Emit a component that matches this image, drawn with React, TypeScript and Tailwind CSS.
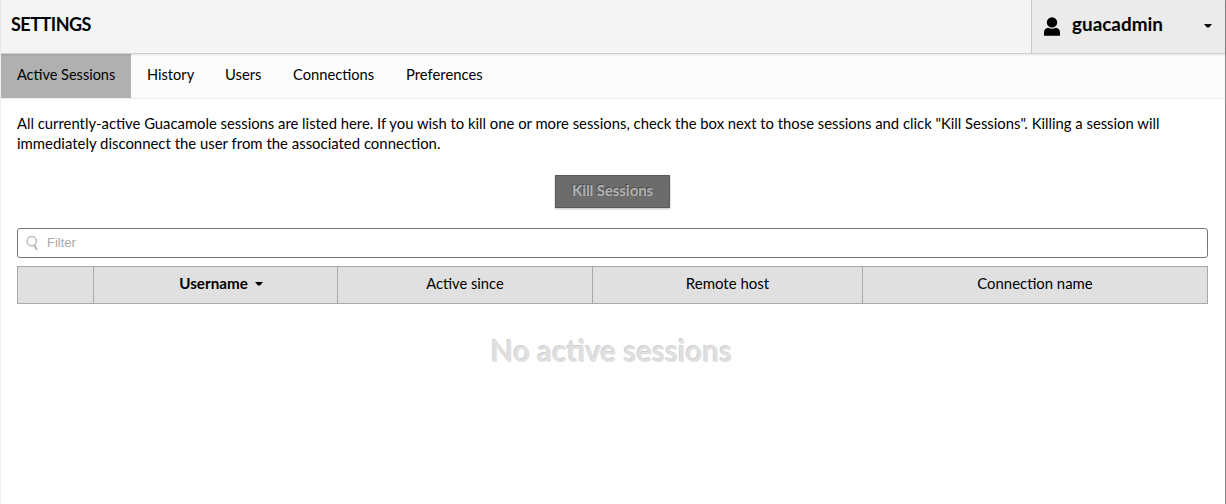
import type { ReactNode } from "react";

const tabs = [
  { label: "Active Sessions", className: "w-[130px] bg-[#b0b0b0] pt-[11px] text-[14.5px]" },
  { label: "History", className: "w-[78px] pt-[11px] text-[14.6px]" },
  { label: "Users", className: "w-[68px] pt-[10px] text-[14.8px]" },
  { label: "Connections", className: "w-[113px] pt-[10px] text-[14.7px]" },
  { label: "Preferences", className: "w-[109px] pt-[10px] text-[14.8px]" },
];

function Caret() {
  return (
    <svg className="h-1 w-2 shrink-0" viewBox="0 0 8 4" fill="black" aria-hidden="true">
      <path d="M0 0H8L5 3.5H3Z" />
    </svg>
  );
}

function HeaderCell({ width, children }: { width: string; children?: ReactNode }) {
  return (
    <th className={`h-[37px] border border-[#aaa] bg-[#e0e0e0] p-0 pb-[5px] font-normal ${width}`}>
      {children}
    </th>
  );
}

export default function App() {
  return (
    <div className="flex h-[504px] w-[1226px] flex-col border-r border-l border-r-[#878787] border-l-[#efefef] bg-white font-['Lato',sans-serif] text-[14.7px] leading-5 text-black">
      <header className="relative flex h-[54px] shrink-0 border-b border-[#d0d0d0] bg-[#f4f4f4] shadow-[0_1px_2px_rgba(0,0,0,0.1)]">
        <h1 className="flex-1 pt-3 pl-[10px] text-[18px] leading-6 font-bold tracking-[-0.5px]">SETTINGS</h1>
        <div className="flex w-[194px] border-l border-[#c8c8c8] bg-[#ebebeb]">
          <svg className="mt-[17px] ml-[12px] h-[19px] w-4" viewBox="0 0 16 19" aria-hidden="true">
            <circle cx="8" cy="5.4" r="5.2" />
            <path d="M0 18.8V15.5C0 12.5 2 11 4.3 10.8C6.5 12 9.5 12 11.7 10.8C14 11 16 12.5 16 15.5V18.8Z" />
          </svg>
          <span className="ml-3 w-[132px] pt-3 text-[18.9px] leading-6 font-bold">guacadmin</span>
          <span className="pt-6"><Caret /></span>
        </div>
      </header>
      <nav className="flex h-[45px] shrink-0 border-b border-[#ededed] bg-[#fcfcfc]">
        {tabs.map((tab) => (
          <a key={tab.label} className={`h-11 pl-4 whitespace-nowrap ${tab.className}`}>
            {tab.label}
          </a>
        ))}
      </nav>
      <main className="flex flex-col pr-[17px] pl-4">
        <p className="mt-[14px] whitespace-nowrap">
          <span className="block text-[14.82px]">
            All currently-active Guacamole sessions are listed here. If you wish to kill one or more sessions, check the box next to those sessions and click "Kill Sessions". Killing a session will
          </span>
          <span className="block text-[14.92px]">immediately disconnect the user from the associated connection.</span>
        </p>
        <button className="mt-[22px] ml-[538px] h-[33px] w-[115px] border border-[#5a5a5a] bg-[#6c6c6c] pb-1 text-[14.8px] font-bold text-[#b0b0b0] shadow-[0_1px_2px_rgba(0,0,0,0.25)] [text-shadow:-1px_-1px_0_rgba(0,0,0,0.3)]" disabled>
          Kill Sessions
        </button>
        <div className="mt-5 flex h-[30px] w-[1191px] items-center rounded-[3px] border border-[#777] pl-2">
          <svg className="h-[15px] w-[14px]" viewBox="0 0 14 15" fill="none" stroke="#bbb" aria-hidden="true">
            <circle cx="5.7" cy="5.2" r="4.6" strokeWidth="1.5" />
            <path d="M8.3 9L11 14" strokeWidth="2" />
          </svg>
          <input placeholder="Filter" className="ml-[7px] h-6 flex-1 pb-[2px] font-['Liberation_Sans',sans-serif] text-[13px] placeholder:text-[#a9a9a9] outline-none" />
        </div>
        <table className="mt-2 w-[1191px] table-fixed border-collapse">
          <thead>
            <tr>
              <HeaderCell width="w-[76px]" />
              <HeaderCell width="w-[244px]">
                <span className="flex items-center justify-center gap-[7px] pl-[11px] text-[15.2px] font-bold">
                  Username
                  <span className="pt-[3px]"><Caret /></span>
                </span>
              </HeaderCell>
              <HeaderCell width="w-[255px]">Active since</HeaderCell>
              <HeaderCell width="w-[270px]"><span className="text-[15px]">Remote host</span></HeaderCell>
              <HeaderCell width="w-[345px]"><span className="text-[14.9px]">Connection name</span></HeaderCell>
            </tr>
          </thead>
        </table>
        <p className="mt-[27px] w-[1189px] text-center text-[29.5px] leading-10 font-bold text-[#e0e0e0] [text-shadow:-1px_-1px_0_rgba(0,0,0,0.2)]">
          No active sessions
        </p>
      </main>
    </div>
  );
}
